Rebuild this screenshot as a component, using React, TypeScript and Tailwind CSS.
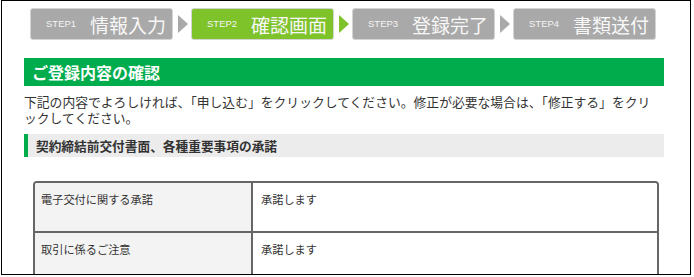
import React from 'react';

const jp = { fontFamily: '"Noto Sans CJK JP", "Noto Sans", sans-serif' };

const steps = [
  { no: 'STEP1', label: '情報入力', active: false },
  { no: 'STEP2', label: '確認画面', active: true },
  { no: 'STEP3', label: '登録完了', active: false },
  { no: 'STEP4', label: '書類送付', active: false },
];

function StepBox({ no, label, active }: { no: string; label: string; active: boolean }) {
  return (
    <div
      className={`flex h-[32px] w-[143px] items-center rounded-[3px] border border-[#d4d4d4] pl-[15px] ${
        active ? 'bg-[#7fc32b]' : 'bg-[#a9a9a9]'
      }`}
    >
      <span className="text-[9.5px] leading-none text-[#f4f4f4]" style={{ fontFamily: '"Liberation Sans", Arial, sans-serif' }}>
        {no}
      </span>
      <span className="ml-[14px] text-[19px] leading-none text-[#f7f7f7]" style={jp}>
        {label}
      </span>
    </div>
  );
}

function Arrow({ active }: { active: boolean }) {
  return (
    <svg className="ml-[5px] mr-[3px] h-[18px] w-[10px]" viewBox="0 0 10 18">
      <polygon points="0,0 10,9 0,18" fill={active ? '#7fc32b' : '#a9a9a9'} />
    </svg>
  );
}

function Row({ label, value }: { label: string; value: string }) {
  return (
    <div className="flex h-[50px] border-b-2 border-[#666]">
      <div className="w-[218px] border-r-2 border-[#666] bg-[#f3f3f3] pl-[6px] pt-[8px] text-[11.2px] leading-[16px] text-[#333]">
        {label}
      </div>
      <div className="flex-1 bg-white pl-[8px] pt-[8px] text-[11.2px] leading-[16px] text-[#333]">{value}</div>
    </div>
  );
}

export default function App() {
  return (
    <div className="h-[277px] w-[694px] bg-white">
      <div className="ml-px h-[275px] w-[690px] overflow-hidden border border-black bg-white" style={jp}>
        {/* Steps */}
        <div className="flex items-center pl-[28px] pt-[7px]">
          {steps.map((s, i) => (
            <React.Fragment key={s.no}>
              <StepBox {...s} />
              {i < steps.length - 1 && <Arrow active={s.active} />}
            </React.Fragment>
          ))}
        </div>

        <div className="mt-[18px] w-[640px] pl-[22px] box-content">
          {/* Heading */}
          <div className="flex h-[28px] items-center bg-[#00ac4c] pl-[8px] text-[16px] font-bold text-white">
            ご登録内容の確認
          </div>

          <p className="mt-[8px] text-[12.8px] leading-[16px] text-[#333] whitespace-nowrap">
            下記の内容でよろしければ、「申し込む」をクリックしてください。修正が必要な場合は、「修正する」をクリ
            <br />
            ックしてください。
          </p>

          {/* Sub heading */}
          <div className="mt-[8px] flex h-[23px] items-center border-l-4 border-[#00ac4c] bg-[#ececec] pl-[8px] text-[12.7px] font-bold text-[#333]">
            契約締結前交付書面、各種重要事項の承諾
          </div>

          {/* Table */}
          <div className="ml-[9px] mt-[24px] w-[626px] overflow-hidden rounded-t-[4px] border-x-2 border-t-2 border-[#666]">
            <Row label="電子交付に関する承諾" value="承諾します" />
            <Row label="取引に係るご注意" value="承諾します" />
          </div>
        </div>
      </div>
    </div>
  );
}
